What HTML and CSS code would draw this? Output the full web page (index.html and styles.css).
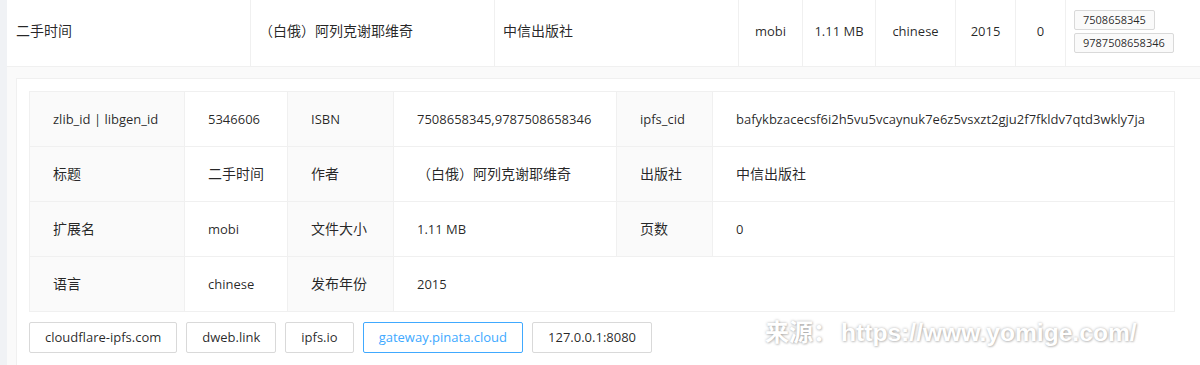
FILE: index.html
```html
<!DOCTYPE html>
<html lang="zh-CN">
<head>
<meta charset="utf-8">
<title>二手时间</title>
<link rel="stylesheet" href="styles.css">
</head>
<body>
<div class="page">
  <div class="sheet">
    <div class="book-row">
      <div class="cell zh first">二手时间</div>
      <div class="cell zh">（白俄）阿列克谢耶维奇</div>
      <div class="cell zh">中信出版社</div>
      <div class="cell center">mobi</div>
      <div class="cell center">1.11 MB</div>
      <div class="cell center">chinese</div>
      <div class="cell center">2015</div>
      <div class="cell center">0</div>
      <div class="cell tags">
        <span class="tag">7508658345</span>
        <span class="tag">9787508658346</span>
      </div>
    </div>
    <div class="expanded">
      <div class="card">
        <div class="desc">
          <div class="d label">zlib_id | libgen_id</div>
          <div class="d">5346606</div>
          <div class="d label">ISBN</div>
          <div class="d">7508658345,9787508658346</div>
          <div class="d label">ipfs_cid</div>
          <div class="d">bafykbzacecsf6i2h5vu5vcaynuk7e6z5vsxzt2gju2f7fkldv7qtd3wkly7ja</div>

          <div class="d label zh">标题</div>
          <div class="d zh">二手时间</div>
          <div class="d label zh">作者</div>
          <div class="d zh">（白俄）阿列克谢耶维奇</div>
          <div class="d label zh">出版社</div>
          <div class="d zh">中信出版社</div>

          <div class="d label zh">扩展名</div>
          <div class="d">mobi</div>
          <div class="d label zh">文件大小</div>
          <div class="d">1.11 MB</div>
          <div class="d label zh">页数</div>
          <div class="d">0</div>

          <div class="d label zh">语言</div>
          <div class="d">chinese</div>
          <div class="d label zh">发布年份</div>
          <div class="d span3">2015</div>
        </div>
        <div class="gateways">
          <button class="btn">cloudflare-ipfs.com</button>
          <button class="btn">dweb.link</button>
          <button class="btn">ipfs.io</button>
          <button class="btn active">gateway.pinata.cloud</button>
          <button class="btn">127.0.0.1:8080</button>
        </div>
      </div>
    </div>
  </div>
  <div class="watermark">来源：<span class="wm-url">https://www.yomige.com/</span></div>
</div>
</body>
</html>
```

FILE: styles.css
```css
html, body {
  margin: 0;
  padding: 0;
  background: #f0f2f5;
}

body {
  font-family: "Open Sans", "Noto Sans CJK SC", sans-serif;
  font-size: 13px;
  color: rgba(0, 0, 0, 0.85);
}

.zh {
  font-size: 14px;
}

.page {
  position: relative;
  width: 1200px;
  height: 365px;
  overflow: hidden;
  padding-left: 7px;
  box-sizing: border-box;
}

.sheet {
  background: #fff;
  height: 100%;
}

.book-row {
  display: grid;
  grid-template-columns: 244px 244px 244px 64px 73px 80px 60px 50px 1fr;
  height: 67px;
  border-bottom: 1px solid #f0f0f0;
  box-sizing: border-box;
}

.cell {
  display: flex;
  align-items: center;
  padding: 0 8px 4px;
  line-height: 22px;
  border-right: 1px solid #f0f0f0;
  white-space: nowrap;
}

.cell.first {
  padding-left: 9px;
}

.cell.center {
  justify-content: center;
}

.cell.tags {
  flex-direction: column;
  align-items: flex-start;
  justify-content: center;
  gap: 3px;
  border-right: none;
}

.tag {
  display: inline-block;
  font-size: 11px;
  line-height: 18px;
  padding: 0 8px;
  background: #fafafa;
  border: 1px solid #d9d9d9;
  border-radius: 2px;
  color: rgba(0, 0, 0, 0.85);
}

.expanded {
  background: #fafafa;
  padding: 11px 0 0 9px;
  height: calc(100% - 67px);
  box-sizing: border-box;
}

.card {
  background: #fff;
  border-top: 1px solid #f0f0f0;
  border-left: 1px solid #f0f0f0;
  padding: 12px 12px 12px 12px;
  margin-right: -20px;
  height: 100%;
  box-sizing: border-box;
}

.desc {
  display: grid;
  grid-template-columns: 155px 103px 106px 223px 96px 462px;
  width: 1146px;
  border-top: 1px solid #f0f0f0;
  border-left: 1px solid #f0f0f0;
  box-sizing: border-box;
}

.d {
  padding: 16px 24px 16px 23px;
  line-height: 22px;
  border-right: 1px solid #f0f0f0;
  border-bottom: 1px solid #f0f0f0;
  white-space: nowrap;
}

.d.label {
  background: #fafafa;
}

.d.span3 {
  grid-column: span 3;
}

.gateways {
  display: flex;
  gap: 9px;
  margin-top: 10px;
}

.btn {
  font-family: inherit;
  font-size: 13px;
  height: 31px;
  line-height: 21px;
  padding: 4px 15px;
  background: #fff;
  border: 1px solid #d9d9d9;
  border-radius: 2px;
  color: rgba(0, 0, 0, 0.85);
  box-sizing: border-box;
  cursor: pointer;
}

.btn.active {
  color: #40a9ff;
  border-color: #40a9ff;
}

.watermark {
  position: absolute;
  left: 765px;
  top: 321px;
  font-family: "Liberation Sans", "Noto Sans CJK SC", sans-serif;
  font-weight: bold;
  font-size: 24px;
  line-height: 24px;
  color: #fff;
  white-space: nowrap;
  text-shadow: 0 0 3px rgba(0, 0, 0, 0.3), 1px 1px 2px rgba(0, 0, 0, 0.15);
}

.wm-url {
  margin-left: 4px;
  font-size: 24.6px;
}
```
